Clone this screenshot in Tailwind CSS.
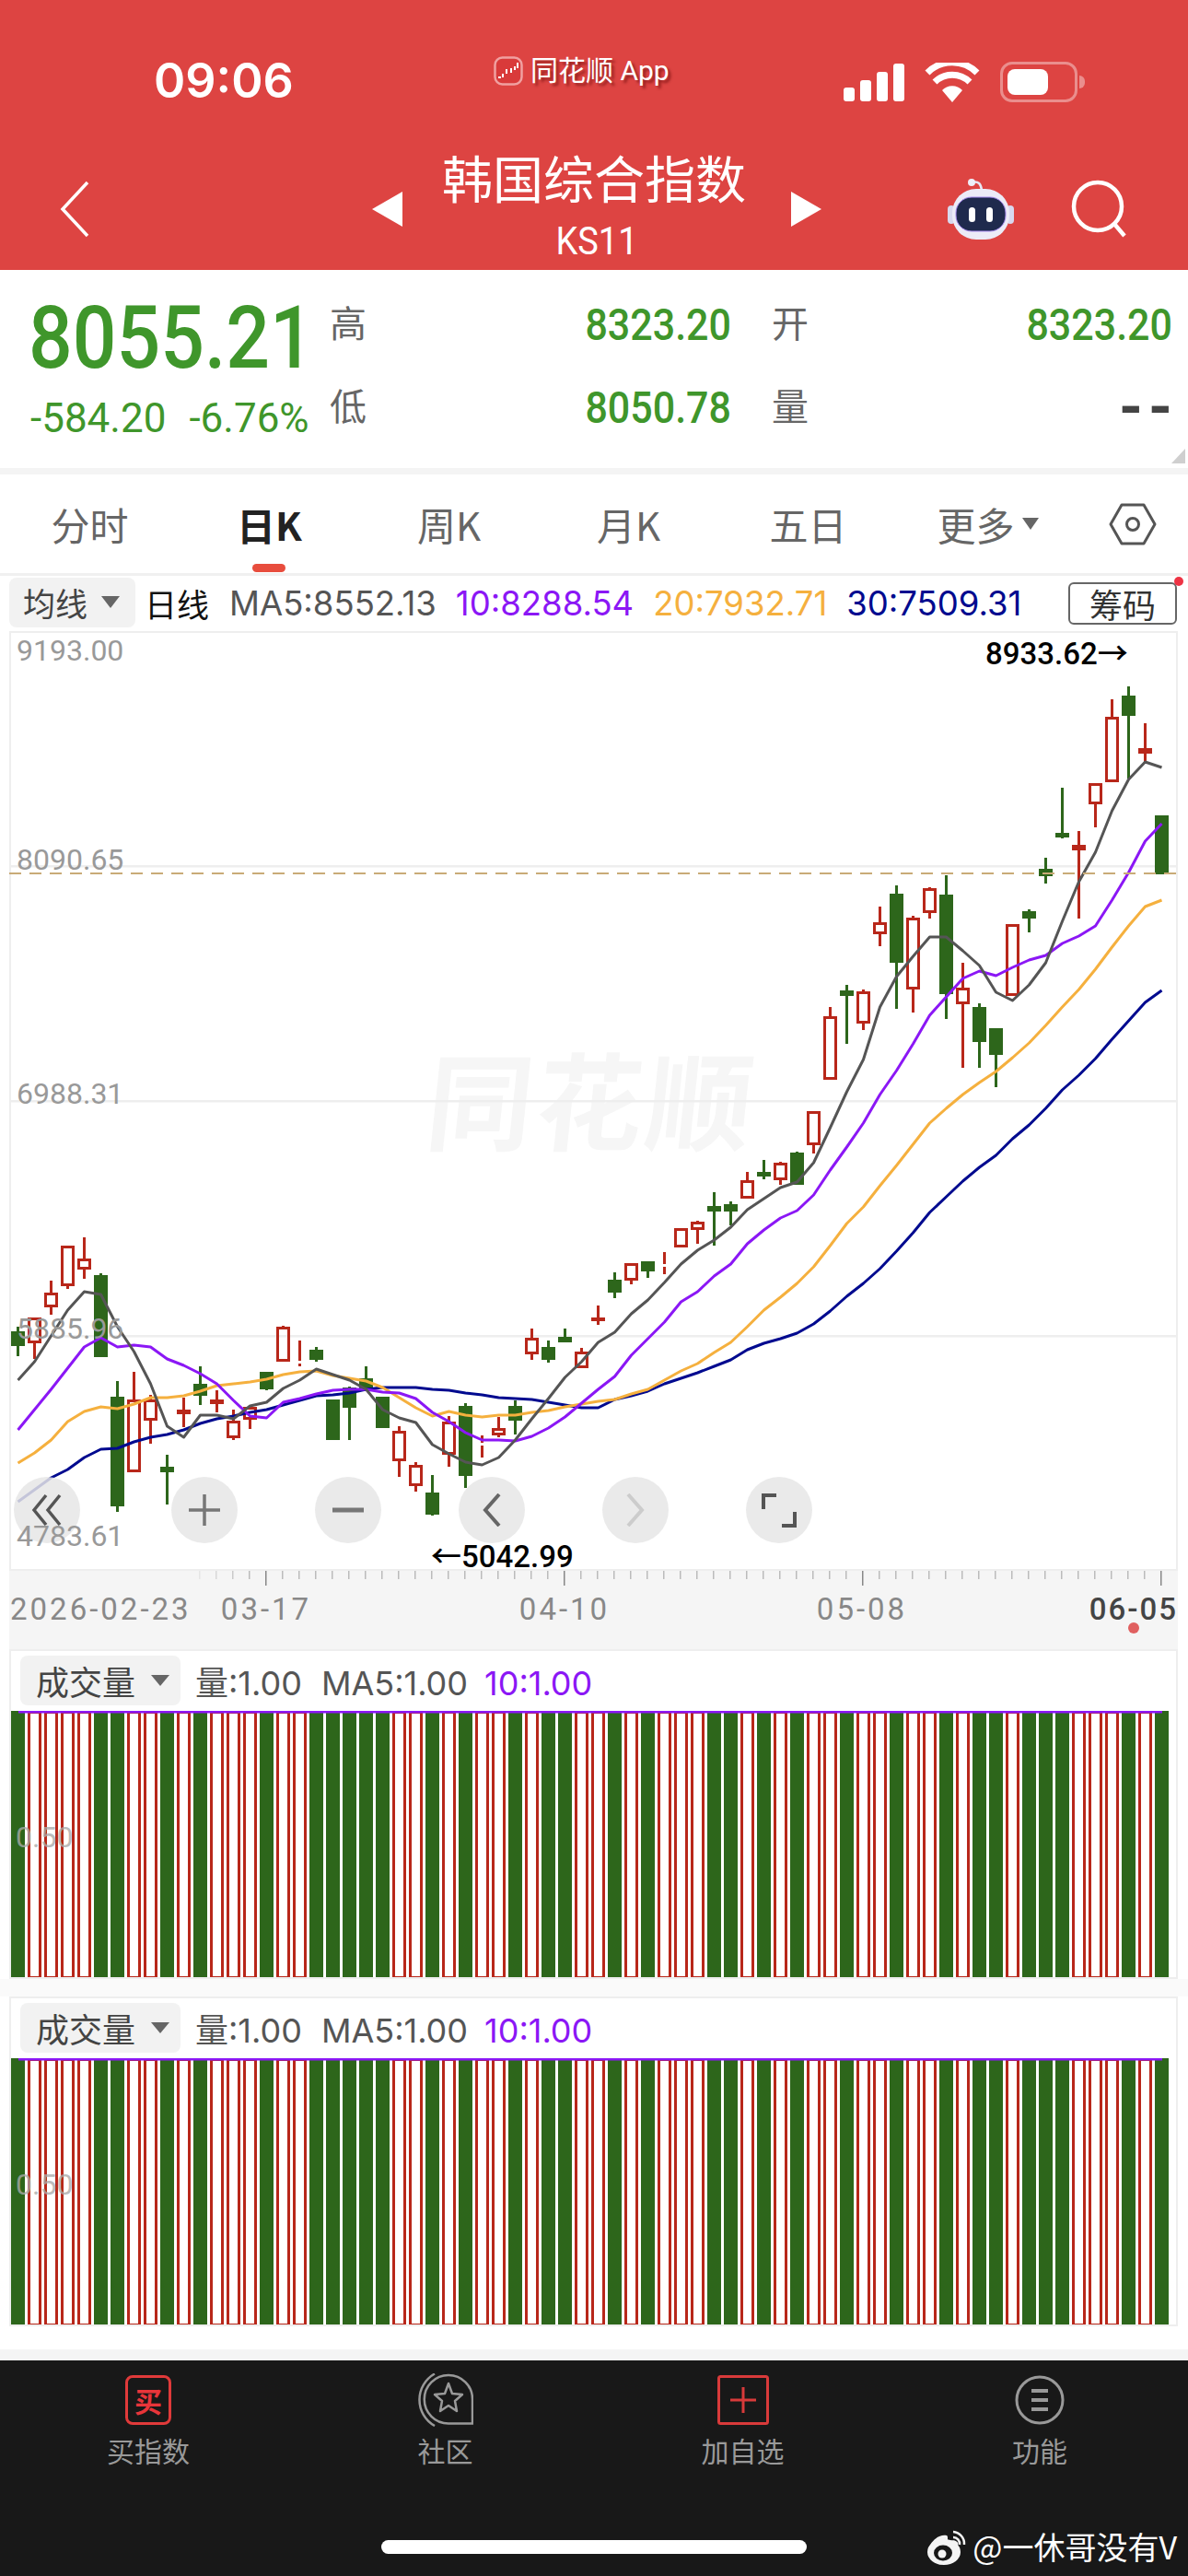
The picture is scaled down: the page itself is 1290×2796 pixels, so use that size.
<!DOCTYPE html>
<html lang="zh">
<head>
<meta charset="utf-8">
<script src="https://cdn.jsdelivr.net/npm/@tailwindcss/browser@4"></script>
<title>韩国综合指数</title>
</head>
<body class="bg-white">
<div class="w-[1290px] h-[2796px] overflow-hidden flex flex-col bg-white font-['Roboto','Noto_Sans_CJK_SC',sans-serif]">

  <!-- header -->
  <header class="h-[293px] bg-[#dd4442] text-white flex flex-col shrink-0">
    <div class="h-[160px] pt-[58px]">
      <div class="h-[60px] flex items-center pl-[167px]">
        <span class="w-[150px] font-['Inter',sans-serif] font-semibold text-[52px] leading-[60px]">09:06</span>
        <div class="ml-[219px] mb-[22px] flex items-center gap-[8px] w-[192px]">
          <svg width="32" height="32" viewBox="0 0 32 32" class="shrink-0"><rect x="1.5" y="1.5" width="29" height="29" rx="8" fill="#d93a3a" stroke="#f0a0a0" stroke-width="2.5"/><path d="M5 23h3M10 19v4M14 14v5M19 18v-5M23 11v4M26 7v6" stroke="#fff" stroke-width="2"/></svg>
          <span class="text-[30px] leading-[36px] whitespace-nowrap [text-shadow:3px_3px_3px_rgba(90,0,0,.55)]">同花顺 App</span>
        </div>
        <div class="ml-[188px] flex items-end gap-[6px] h-[41px] mb-[-2px]">
          <span class="w-[12px] h-[15px] bg-white rounded-[3px]"></span>
          <span class="w-[12px] h-[23px] bg-white rounded-[3px]"></span>
          <span class="w-[12px] h-[32px] bg-white rounded-[3px]"></span>
          <span class="w-[12px] h-[41px] bg-white rounded-[3px]"></span>
        </div>
        <svg width="60" height="43" viewBox="0 0 60 43" class="ml-[22px] mb-[-2px] shrink-0"><path d="M30 43 L19 30 A15 15 0 0 1 41 30 Z" fill="#fff"/><path d="M11 21 A27 27 0 0 1 49 21" fill="none" stroke="#fff" stroke-width="7"/><path d="M3 11 A38 38 0 0 1 57 11" fill="none" stroke="#fff" stroke-width="7"/></svg>
        <div class="ml-[22px] mb-[-2px] flex items-center">
          <div class="w-[84px] h-[44px] rounded-[13px] border-[3px] border-white/40 p-[5px]"><div class="w-[44px] h-full bg-white rounded-[8px]"></div></div>
          <div class="ml-[2px] w-[6px] h-[14px] rounded-r-full bg-white/40"></div>
        </div>
      </div>
    </div>
    <div class="h-[133px] flex items-center">
      <svg width="34" height="62" viewBox="0 0 34 62" class="ml-[64px] shrink-0"><path d="M31 2 L4 31 L31 60" fill="none" stroke="#fff" stroke-width="3.5"/></svg>
      <svg width="33" height="38" viewBox="0 0 33 38" class="ml-[306px] shrink-0"><path d="M33 0 V38 L0 19 Z" fill="#fff"/></svg>
      <div class="w-[422px] h-[133px] pt-[6px] flex flex-col items-center">
        <span class="text-[55px] leading-[60px] mr-[6px]">韩国综合指数</span>
        <span class="mt-[16px] text-[38px] leading-[40px] scale-y-110">KS11</span>
      </div>
      <svg width="33" height="38" viewBox="0 0 33 38" class="shrink-0"><path d="M0 0 V38 L33 19 Z" fill="#fff"/></svg>
      <svg width="72" height="66" viewBox="0 0 72 66" class="ml-[137px] shrink-0">
        <path d="M26 4 C34 2 36 6 37 12" fill="none" stroke="#e6e6f4" stroke-width="2.5"/>
        <circle cx="26" cy="4" r="4" fill="#eeeef8"/>
        <rect x="0" y="29" width="8" height="20" rx="4" fill="#d8d8ee"/>
        <rect x="64" y="29" width="8" height="20" rx="4" fill="#d8d8ee"/>
        <rect x="5" y="11" width="62" height="55" rx="26" fill="#ecebf7"/>
        <rect x="9" y="20" width="54" height="37" rx="17" fill="#1f2a4d" stroke="#a98cf0" stroke-width="1"/>
        <rect x="23" y="31" width="7" height="16" rx="3.5" fill="#fff"/>
        <rect x="42" y="31" width="7" height="16" rx="3.5" fill="#fff"/>
      </svg>
      <svg width="62" height="64" viewBox="0 0 62 64" class="ml-[62px] shrink-0"><circle cx="29" cy="29" r="26" fill="none" stroke="#fff" stroke-width="4.5"/><path d="M47 48 L58 61" stroke="#fff" stroke-width="4.5"/></svg>
    </div>
  </header>

  <!-- quote -->
  <section class="h-[215px] shrink-0 flex relative bg-white">
    <div class="w-[358px] pl-[31px] pt-[30px] flex flex-col text-[#3f962b]">
      <span class="h-[90px] text-[84px] leading-[90px] font-medium scale-y-[1.12] origin-center whitespace-nowrap">8055.21</span>
      <div class="mt-[11px] pl-[2px] h-[60px] flex items-center gap-[25px] text-[44px] leading-[60px] whitespace-nowrap">
        <span>-584.20</span><span>-6.76%</span>
      </div>
    </div>
    <div class="flex-1 pt-[15px] grid grid-cols-[480px_452px] grid-rows-[90px_90px] items-center">
      <div class="flex items-center justify-between pr-[44px]"><span class="text-[40px] text-[#666]">高</span><span class="text-[43px] font-medium text-[#3f962b] scale-y-110">8323.20</span></div>
      <div class="flex items-center justify-between pr-[17px]"><span class="text-[40px] text-[#666]">开</span><span class="text-[43px] font-medium text-[#3f962b] scale-y-110">8323.20</span></div>
      <div class="flex items-center justify-between pr-[44px]"><span class="text-[40px] text-[#666]">低</span><span class="text-[43px] font-medium text-[#3f962b] scale-y-110">8050.78</span></div>
      <div class="flex items-center justify-between pr-[17px]"><span class="text-[40px] text-[#666]">量</span><span class="text-[66px] leading-[50px] font-bold text-[#444] tracking-[6px] mr-[-6px]">--</span></div>
    </div>
    <div class="absolute right-[3px] bottom-[5px] w-0 h-0 border-l-[15px] border-l-transparent border-b-[16px] border-b-[#cfcfcf]"></div>
  </section>
  <div class="h-[7px] shrink-0 bg-[#f4f4f4]"></div>

  <!-- tabs -->
  <nav class="h-[107px] shrink-0 grid grid-cols-[repeat(6,195px)_120px] items-center text-[42px] leading-[50px] text-[#666] font-['Noto_Sans_CJK_SC',sans-serif]">
    <div class="text-center">分时</div>
    <div class="relative text-center text-[#222] font-semibold">日K<div class="absolute left-[79px] top-[68px] w-[36px] h-[9px] rounded-full bg-[#e84d3d]"></div></div>
    <div class="text-center">周K</div>
    <div class="text-center">月K</div>
    <div class="text-center">五日</div>
    <div class="flex items-center justify-center gap-[8px]">更多<span class="w-0 h-0 border-x-[9px] border-x-transparent border-t-[13px] border-t-[#666]"></span></div>
    <div class="flex justify-center"><svg width="52" height="46" viewBox="0 0 52 46"><path d="M14 2 H38 L50 23 L38 44 H14 L2 23 Z" fill="none" stroke="#555" stroke-width="3" stroke-linejoin="round"/><circle cx="26" cy="23" r="6.5" fill="none" stroke="#555" stroke-width="3"/></svg></div>
  </nav>
  <div class="h-[3px] shrink-0 bg-[#f0f0f0]"></div>

  <!-- MA row -->
  <div class="h-[60px] shrink-0 relative flex items-center pl-[10px] text-[36.5px] leading-[44px] whitespace-nowrap font-['Inter','Noto_Sans_CJK_SC',sans-serif]">
    <div class="w-[137px] h-[54px] mt-[-3px] rounded-lg bg-[#f2f2f2] flex items-center pl-[15px] text-[#444] text-[35px] font-['Noto_Sans_CJK_SC',sans-serif]">均线<span class="ml-[15px] w-0 h-0 border-x-[10px] border-x-transparent border-t-[13px] border-t-[#666]"></span></div>
    <span class="ml-[10px] text-[#111] text-[35px] font-['Noto_Sans_CJK_SC',sans-serif]">日线</span>
    <span class="ml-[22px] text-[#555]">MA5:8552.13</span>
    <span class="ml-[21px] text-[#8b17f5]">10:8288.54</span>
    <span class="ml-[21px] text-[#f5b03e]">20:7932.71</span>
    <span class="ml-[21px] text-[#000a8f]">30:7509.31</span>
    <div class="absolute left-[1160px] top-[7px] w-[118px] h-[46px] border-2 border-[#666] rounded-[6px] flex items-center justify-center text-[#333] text-[36px] font-['Noto_Sans_CJK_SC',sans-serif]">筹码</div>
    <div class="absolute left-[1275px] top-[1px] w-[10px] h-[10px] rounded-full bg-[#ee3344]"></div>
  </div>

  <!-- candlestick chart -->
  <div class="relative h-[1020px] w-[1269px] ml-[10px] shrink-0 outline-2 -outline-offset-2 outline-[#eeeeee]">
    <span class="absolute left-[455px] top-[440px] text-[115px] leading-[130px] font-bold -skew-x-6 tracking-[4px] text-[#f6f6f6] whitespace-nowrap font-['Noto_Sans_CJK_SC',sans-serif]">同花顺</span>
    <svg id="chart" class="absolute left-0 top-0" width="1269" height="1020" viewBox="10 685 1269 1020"></svg>
    <!-- zoom and pan controls -->
    <div class="absolute left-[5px] top-[918px] flex gap-[84px]">
      <div class="w-[72px] h-[72px] mr-[15px] rounded-full bg-[#e6e6e6]/85 flex items-center justify-center"><svg width="34" height="36" viewBox="0 0 34 36"><path d="M16 2 L3 18 L16 34M31 2 L18 18 L31 34" fill="none" stroke="#555" stroke-width="3.5"/></svg></div>
      <div class="w-[72px] h-[72px] rounded-full bg-[#e6e6e6]/85 flex items-center justify-center"><svg width="36" height="36" viewBox="0 0 36 36"><path d="M18 1 V35M1 18 H35" fill="none" stroke="#777" stroke-width="3.5"/></svg></div>
      <div class="w-[72px] h-[72px] rounded-full bg-[#e6e6e6]/85 flex items-center justify-center"><svg width="36" height="36" viewBox="0 0 36 36"><path d="M1 18 H35" fill="none" stroke="#777" stroke-width="5"/></svg></div>
      <div class="w-[72px] h-[72px] rounded-full bg-[#e6e6e6]/85 flex items-center justify-center"><svg width="20" height="36" viewBox="0 0 20 36"><path d="M18 1 L3 18 L18 35" fill="none" stroke="#666" stroke-width="4"/></svg></div>
      <div class="w-[72px] h-[72px] rounded-full bg-[#e6e6e6]/85 flex items-center justify-center"><svg width="20" height="36" viewBox="0 0 20 36"><path d="M2 1 L17 18 L2 35" fill="none" stroke="#ccc" stroke-width="4"/></svg></div>
      <div class="w-[72px] h-[72px] rounded-full bg-[#e6e6e6]/85 flex items-center justify-center"><svg width="38" height="37" viewBox="0 0 38 37"><path d="M2 17 V2 H16M36 20 V35 H22" fill="none" stroke="#555" stroke-width="4"/></svg></div>
    </div>
    <span class="absolute left-[8px] top-[1px] text-[32px] leading-[40px] text-[#999]">9193.00</span>
    <span class="absolute left-[8px] top-[228px] text-[32px] leading-[40px] text-[#999]">8090.65</span>
    <span class="absolute left-[8px] top-[482px] text-[32px] leading-[40px] text-[#999]">6988.31</span>
    <span class="absolute left-[8px] top-[737px] text-[32px] leading-[40px] text-[#999]">5885.96</span>
    <span class="absolute left-[8px] top-[962px] text-[32px] leading-[40px] text-[#999]">4783.61</span>
    <span class="absolute left-[1060px] top-[5px] text-[33px] leading-[40px] font-medium text-black whitespace-nowrap">8933.62→</span>
    <span class="absolute left-[458px] top-[985px] text-[33px] leading-[40px] font-medium text-black whitespace-nowrap">←5042.99</span>
  </div>

  <!-- date strip -->
  <div class="relative h-[85px] shrink-0 ml-[10px] w-[1269px] bg-[#f5f5f5]">
    <svg id="ticks" class="absolute left-0 top-0" width="1269" height="20" viewBox="10 1705 1269 20"></svg>
    <span class="absolute left-[1px] top-[20px] text-[33px] leading-[44px] text-[#888] tracking-[3px] whitespace-nowrap">2026-02-23</span>
    <span class="absolute left-[279px] -translate-x-1/2 top-[20px] text-[33px] leading-[44px] text-[#888] tracking-[3px]">03-17</span>
    <span class="absolute left-[603px] -translate-x-1/2 top-[20px] text-[33px] leading-[44px] text-[#888] tracking-[3px]">04-10</span>
    <span class="absolute left-[926px] -translate-x-1/2 top-[20px] text-[33px] leading-[44px] text-[#888] tracking-[3px]">05-08</span>
    <span class="absolute right-[0px] top-[20px] text-[33px] leading-[44px] text-[#444] font-medium tracking-[2px]">06-05</span>
    <div class="absolute left-[1215px] top-[56px] w-[12px] h-[12px] rounded-full bg-[#e06060]"></div>
  </div>

  <!-- volume panel 1 -->
  <div class="relative h-[358px] shrink-0 ml-[10px] w-[1269px] outline-2 -outline-offset-2 outline-[#eeeeee] flex flex-col">
    <div class="h-[67px] flex items-center pl-[12px] text-[36px] leading-[44px] whitespace-nowrap font-['Inter','Noto_Sans_CJK_SC',sans-serif]">
      <div class="w-[174px] h-[54px] rounded-lg bg-[#f2f2f2] flex items-center pl-[17px] text-[#444] font-['Noto_Sans_CJK_SC',sans-serif]">成交量<span class="ml-[17px] w-0 h-0 border-x-[10px] border-x-transparent border-t-[12px] border-t-[#666]"></span></div>
      <span class="ml-[16px] mt-[6px] text-[#555]">量:1.00</span>
      <span class="ml-[21px] mt-[6px] text-[#555]">MA5:1.00</span>
      <span class="ml-[18px] mt-[6px] text-[#8b17f5]">10:1.00</span>
    </div>
    <svg class="vol" width="1269" height="291" viewBox="10 1857 1269 291"></svg>
    <span class="absolute left-[7px] top-[184px] text-[32px] leading-[40px] text-[#aaa]/80">0.50</span>
  </div>
  <div class="h-[19px] shrink-0 bg-[#fafafa]"></div>

  <!-- volume panel 2 -->
  <div class="relative h-[358px] shrink-0 ml-[10px] w-[1269px] outline-2 -outline-offset-2 outline-[#eeeeee] flex flex-col">
    <div class="h-[67px] flex items-center pl-[12px] text-[36px] leading-[44px] whitespace-nowrap font-['Inter','Noto_Sans_CJK_SC',sans-serif]">
      <div class="w-[174px] h-[54px] rounded-lg bg-[#f2f2f2] flex items-center pl-[17px] text-[#444] font-['Noto_Sans_CJK_SC',sans-serif]">成交量<span class="ml-[17px] w-0 h-0 border-x-[10px] border-x-transparent border-t-[12px] border-t-[#666]"></span></div>
      <span class="ml-[16px] mt-[6px] text-[#555]">量:1.00</span>
      <span class="ml-[21px] mt-[6px] text-[#555]">MA5:1.00</span>
      <span class="ml-[18px] mt-[6px] text-[#8b17f5]">10:1.00</span>
    </div>
    <svg class="vol" width="1269" height="291" viewBox="10 1857 1269 291"></svg>
    <span class="absolute left-[7px] top-[184px] text-[32px] leading-[40px] text-[#aaa]/80">0.50</span>
  </div>

  <div class="h-[25px] shrink-0 bg-white"></div>
  <div class="h-[12px] shrink-0 bg-[#f4f4f4]"></div>

  <!-- tab bar -->
  <footer class="relative flex-1 bg-[#181818] text-[#999] font-['Noto_Sans_CJK_SC',sans-serif]">
    <div class="grid grid-cols-[322px_323px_323px_322px] pt-[16px]">
      <div class="flex flex-col items-center">
        <div class="w-[50px] h-[54px] rounded-[8px] border-[3px] border-[#e03a3a] flex items-center justify-center text-[#e8353a] text-[30px] leading-[36px] font-bold">买</div>
        <span class="mt-[9px] text-[30px] leading-[36px]">买指数</span>
      </div>
      <div class="flex flex-col items-center">
        <svg width="60" height="58" viewBox="0 0 60 58" class="mt-[-2px] mb-[-2px]"><path d="M33 2 A26 26 0 0 1 59 28 V54.5 H33 A26 26 0 0 1 33 2 Z" fill="none" stroke="#999" stroke-width="2.5"/><path d="M18 0.5 A32.4 32.4 0 0 0 18 57" fill="none" stroke="#999" stroke-width="2.5"/><path d="M33 11 L37 22 L48 23 L40 30 L42 41 L33 35 L24 41 L26 30 L18 23 L29 22 Z" fill="none" stroke="#999" stroke-width="2.5" stroke-linejoin="round"/></svg>
        <span class="mt-[9px] text-[30px] leading-[36px]">社区</span>
      </div>
      <div class="flex flex-col items-center">
        <svg width="56" height="54" viewBox="0 0 56 54"><rect x="1.5" y="1.5" width="53" height="51" rx="2" fill="none" stroke="#d83a3a" stroke-width="3"/><path d="M28 13 V41M14 27 H42" stroke="#d83a3a" stroke-width="3"/></svg>
        <span class="mt-[9px] text-[30px] leading-[36px]">加自选</span>
      </div>
      <div class="flex flex-col items-center">
        <svg width="54" height="54" viewBox="0 0 54 54"><circle cx="27" cy="27" r="25" fill="none" stroke="#999" stroke-width="3"/><path d="M18 17 H36M18 27 H36M18 37 H36" stroke="#999" stroke-width="4"/></svg>
        <span class="mt-[9px] text-[30px] leading-[36px]">功能</span>
      </div>
    </div>
    <div class="absolute left-[414px] top-[195px] w-[462px] h-[15px] rounded-full bg-white"></div>
    <div class="absolute right-[12px] top-[182px] flex items-center gap-[4px] text-white text-[34px] leading-[40px] whitespace-nowrap">
      <svg width="46" height="40" viewBox="0 0 46 40" class="shrink-0"><ellipse cx="19" cy="26" rx="18" ry="14" fill="#f4f4f4"/><path d="M2 24 C4 14 14 6 22 8 C24 9 22 14 24 14 C30 12 36 14 34 20 Z" fill="#f4f4f4"/><ellipse cx="18" cy="27" rx="10" ry="8.5" fill="#181818"/><circle cx="17" cy="28" r="4.5" fill="#f4f4f4"/><path d="M29 4 A13 13 0 0 1 41 18M29 10 A7 7 0 0 1 36 18" fill="none" stroke="#f4f4f4" stroke-width="2.5"/></svg>
      <span>@一休哥没有V</span>
    </div>
  </footer>
</div>

<script>
var C=[[1440,1445,1461,1472],[1430,1430,1458,1475],[1390,1403,1419,1427],[1352,1352,1396,1399],[1343,1366,1378,1388],[1382,1384,1473,1473],[1499,1516,1635,1641],[1489,1519,1598,1598],[1514,1519,1542,1567],[1579,1592,1598,1633],[1517,1530,1535,1549],[1483,1502,1515,1525],[1509,1519,1524,1533],[1530,1542,1561,1563],[1526,1527,1541,1551],[1489,1489,1508,1509],[1439,1440,1478,1478],[1455,1477,1480,1483],[1462,1465,1476,1478],[1519,1519,1563,1563],[1505,1506,1528,1563],[1483,1496,1507,1510],[1516,1516,1550,1550],[1548,1553,1586,1603],[1587,1590,1613,1619],[1601,1620,1644,1645],[1537,1543,1579,1592],[1523,1526,1602,1615],[1558,1566,1569,1582],[1538,1550,1558,1560],[1520,1526,1542,1557],[1442,1452,1470,1476],[1455,1462,1476,1479],[1442,1451,1457,1457],[1463,1467,1485,1485],[1417,1430,1434,1438],[1381,1389,1403,1409],[1371,1371,1390,1394],[1369,1369,1380,1387],[1359,1372,1375,1383],[1333,1333,1354,1354],[1325,1326,1335,1350],[1294,1309,1315,1352],[1304,1307,1315,1330],[1272,1281,1301,1301],[1259,1272,1277,1280],[1261,1262,1281,1286],[1250,1251,1286,1286],[1206,1206,1243,1252],[1093,1103,1172,1172],[1069,1075,1081,1133],[1074,1076,1111,1118],[984,1001,1014,1027],[961,970,1045,1095],[994,996,1074,1099],[963,964,991,997],[950,971,1079,1106],[1045,1072,1090,1159],[1089,1093,1131,1159],[1116,1116,1145,1180],[1003,1003,1081,1081],[987,989,997,1012],[931,943,951,959],[855,904,909,910],[902,917,923,997],[850,850,873,898],[759,778,849,849],[745,755,777,845],[785,812,818,827],[885,885,949,949]];
var R=[1,2,3,4,7,8,10,12,13,14,16,17,23,24,26,28,29,31,34,35,37,39,40,41,44,46,48,49,51,52,54,55,57,60,64,65,66,68];
var M5=[1498,1478,1450,1422,1402,1405,1440,1467,1502,1548,1560,1536,1536,1540,1526,1522,1507,1498,1486,1492,1498,1508,1530,1539,1544,1568,1578,1587,1590,1582,1563,1540,1518,1495,1478,1457,1446,1426,1411,1392,1372,1357,1346,1332,1313,1301,1289,1283,1262,1224,1185,1150,1093,1060,1038,1017,1017,1032,1048,1077,1086,1069,1045,1000,957,925,880,846,827,833];
var M10=[1552,1530,1508,1485,1462,1452,1462,1460,1462,1475,1482,1491,1502,1520,1537,1539,1522,1518,1513,1509,1508,1508,1511,1512,1518,1533,1543,1555,1563,1563,1564,1559,1550,1538,1523,1508,1494,1471,1453,1435,1413,1402,1385,1372,1350,1335,1322,1314,1297,1270,1245,1219,1188,1162,1133,1102,1082,1062,1054,1059,1050,1042,1037,1024,1016,1005,977,947,913,894];
var M20=[1588,1577,1563,1543,1532,1527,1529,1524,1517,1517,1515,1510,1504,1502,1500,1497,1492,1489,1488,1493,1496,1499,1506,1517,1528,1537,1532,1536,1538,1536,1536,1533,1531,1527,1524,1521,1519,1513,1508,1498,1488,1480,1468,1457,1440,1422,1408,1393,1375,1352,1328,1310,1287,1265,1242,1219,1203,1188,1175,1163,1148,1132,1113,1093,1074,1052,1028,1005,984,977];
var M30=[1630,1617,1604,1595,1582,1573,1572,1565,1560,1557,1552,1545,1540,1537,1533,1530,1525,1520,1515,1514,1512,1508,1506,1506,1506,1508,1509,1512,1514,1517,1518,1519,1522,1525,1528,1528,1519,1515,1510,1502,1496,1490,1483,1476,1465,1458,1453,1447,1437,1423,1407,1393,1377,1358,1338,1316,1299,1282,1267,1254,1236,1221,1203,1183,1167,1149,1128,1108,1088,1075];
var RED="#b8271a",GRN="#2d661b";
function isR(i){return R.indexOf(i)>=0}
function poly(a,col){var p=a.map(function(y,i){return (19.5+18*i)+","+y}).join(" ");return '<polyline points="'+p+'" fill="none" stroke="'+col+'" stroke-width="3" stroke-linejoin="round"/>'}
var s='';
[940,1195,1450].forEach(function(y){s+='<rect x="12" y="'+(y-1)+'" width="1265" height="2.5" fill="#eeeeee"/>'});
C.forEach(function(c,i){
  var x=12+18*i,col=isR(i)?RED:GRN;
  if(c[1]>c[0])s+='<rect x="'+(x+6)+'" y="'+c[0]+'" width="3" height="'+(c[1]-c[0])+'" fill="'+col+'"/>';
  if(c[3]>c[2])s+='<rect x="'+(x+6)+'" y="'+c[2]+'" width="3" height="'+(c[3]-c[2])+'" fill="'+col+'"/>';
  if(isR(i))s+='<rect x="'+(x+1.5)+'" y="'+(c[1]+1.5)+'" width="12" height="'+Math.max(0,c[2]-c[1]-3)+'" fill="none" stroke="'+RED+'" stroke-width="3"/>';
  else s+='<rect x="'+x+'" y="'+c[1]+'" width="15" height="'+(c[2]-c[1])+'" fill="'+GRN+'"/>';
});
s+=poly(M30,"#000a8f")+poly(M20,"#f5b03e")+poly(M10,"#8b17f5")+poly(M5,"#555555");
s+='<line x1="10" y1="948" x2="1279" y2="948" stroke="#c9ab77" stroke-width="2" stroke-dasharray="13 9"/>';
document.getElementById('chart').innerHTML=s;

var t='';
for(var i=11;i<70;i++){var x=18+18*i,maj=(i-15)%18==0;t+='<rect x="'+x+'" y="1705" width="1.5" height="'+(maj?16:9)+'" fill="'+(maj?'#888':'#bbb')+'" opacity="'+Math.min(1,(i-10)/4)+'"/>'}
document.getElementById('ticks').innerHTML=t;

var v='';
C.forEach(function(c,i){var x=12+18*i;
  if(isR(i))v+='<rect x="'+(x+1.5)+'" y="1858.5" width="12" height="288" fill="none" stroke="'+RED+'" stroke-width="3"/>';
  else v+='<rect x="'+x+'" y="1857" width="15" height="291" fill="'+GRN+'"/>';
});
v+='<rect x="20" y="1856" width="1242" height="3.5" fill="#8b17f5"/>';
document.querySelectorAll('.vol').forEach(function(e){e.innerHTML=v});
</script>
</body>
</html>
